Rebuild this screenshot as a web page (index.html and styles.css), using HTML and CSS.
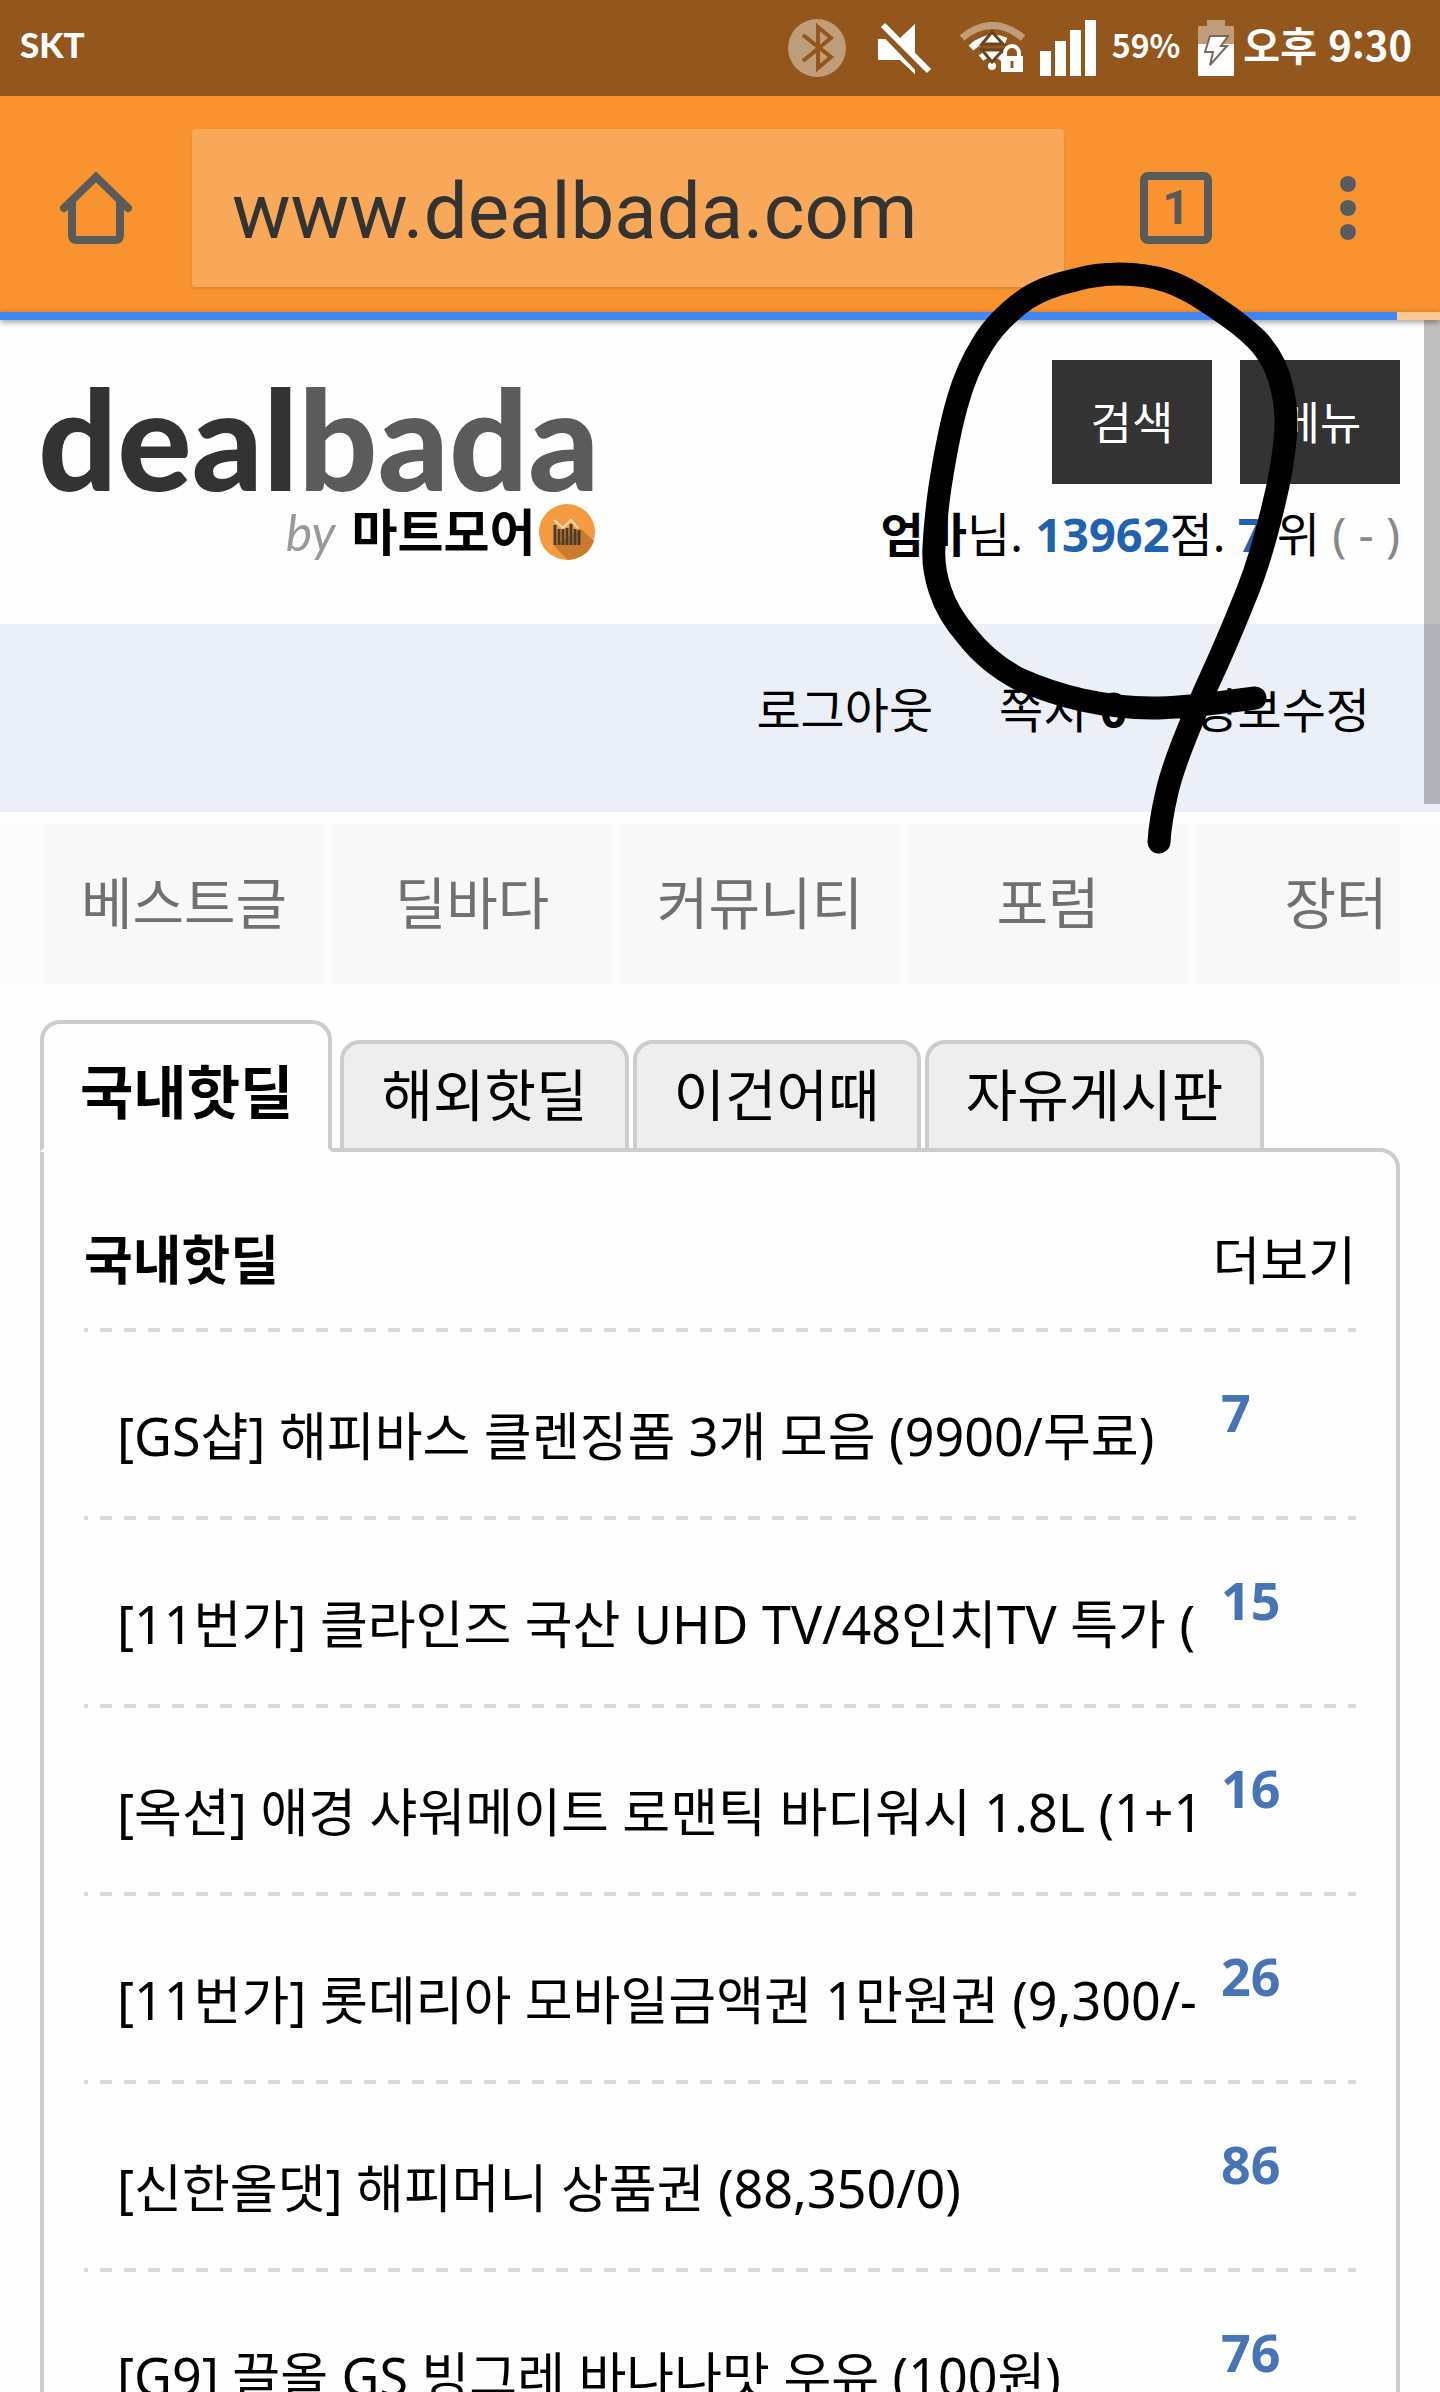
FILE: index.html
```
<!DOCTYPE html>
<html lang="ko">
<head>
    <meta charset="UTF-8">
    <meta name="viewport" content="width=device-width, initial-scale=1.0">
    <title>dealbada</title>
    <link rel="stylesheet" href="styles.css">
</head>
<body>
    <div class="statusbar">
        <span class="carrier">SKT</span>
        <div class="status-icons">
            <svg class="icon-bt" width="58" height="58" viewBox="0 0 58 58">
                <circle cx="29" cy="29" r="29" fill="#c19c78"/>
                <path d="M15 16 L43 38 L30 49 V8 L43 19 L15 42" fill="none" stroke="#93561c" stroke-width="4"/>
            </svg>
            <svg class="icon-mute" width="54" height="52" viewBox="0 0 54 52">
                <path d="M0 17 H8 L37 47 V52 L22 38 H0 Z M22 16 L37 2 V32 Z" fill="#fff"/>
                <path d="M1 8 L45 54" stroke="#93561c" stroke-width="3"/>
                <path d="M0 17 H6 L37 50 V52 L22 38 H0 Z" fill="#fff"/>
                <path d="M5 3 L51 49" stroke="#fff" stroke-width="6"/>
            </svg>
            <svg class="icon-wifi" width="66" height="52" viewBox="0 0 66 52">
                <path d="M3 16 Q33 -9 64 16" fill="none" stroke="#c19c78" stroke-width="7"/>
                <path d="M12 26 Q28 11 47 19" fill="none" stroke="#fff" stroke-width="7"/>
                <path d="M22 36 Q33 27 44 36" fill="none" stroke="#fff" stroke-width="7"/>
                <circle cx="33" cy="44" r="4" fill="#fff"/>
                <path d="M23 22 L33 10 L44 22 Z M23 28 H44 L33 40 Z" fill="#fff" stroke="#6b451f" stroke-width="3"/>
                <path d="M46 36 V31 a7 7 0 0 1 14 0 V36" fill="none" stroke="#fff" stroke-width="4"/>
                <rect x="42" y="34" width="22" height="16" fill="#fff"/>
                <path d="M53 39 V46" stroke="#93561c" stroke-width="3"/>
            </svg>
            <svg class="icon-signal" width="56" height="56" viewBox="0 0 56 56">
                <path d="M0 31H11V56H0Z M15 21H26V56H15Z M30 10H41V56H30Z M45 0H56V56H45Z" fill="#fff"/>
            </svg>
            <span class="percent">59%</span>
            <svg class="icon-battery" width="36" height="56" viewBox="0 0 36 56">
                <path d="M9 0H27V6H36V24H0V6H9Z" fill="#c19c78"/>
                <path d="M0 24H36V56H0Z" fill="#fff"/>
                <path d="M12 16H30L23 26H29L12 45L15 32H7Z" fill="#fff" stroke="#7a6a5a" stroke-width="2"/>
            </svg>
            <span class="time">오후 9:30</span>
        </div>
    </div>

    <div class="toolbar">
        <button class="tool-btn" type="button" aria-label="홈">
            <svg width="72" height="72" viewBox="0 0 72 72" fill="none" stroke="#5a5a5a" stroke-width="8">
                <path d="M4 36 L36 5 L68 36" stroke-linecap="round"/>
                <path d="M12 29 V63 Q12 68 17 68 H55 Q60 68 60 63 V29"/>
            </svg>
        </button>
        <input class="url" type="text" value="www.dealbada.com" aria-label="주소">
        <button class="tool-btn tab-count" type="button">1</button>
        <button class="tool-btn" type="button" aria-label="더보기 메뉴">
            <svg width="72" height="72" viewBox="0 0 72 72" fill="#5a5a5a">
                <circle cx="36" cy="12" r="8"/>
                <circle cx="36" cy="36" r="8"/>
                <circle cx="36" cy="60" r="8"/>
            </svg>
        </button>
    </div>
    <div class="progress"><div class="progress-bar" style="width: 97%"></div></div>

    <div class="page">
        <header class="header">
            <a class="logo" href="#">
                <span class="logo-name">deal<span class="logo-light">bada</span></span>
                <span class="logo-by">
                    <i>by</i>
                    <b>마트모어</b>
                    <svg width="56" height="56" viewBox="0 0 56 56">
                        <circle cx="28" cy="28" r="28" fill="#f49b42"/>
                        <path d="M15 42 L42 25 L55 37 Q49 54 29 56 Z" fill="#c97a2d"/>
                        <path d="M16 21V41 M20 25V41 M24 25V41 M28 24V41 M32 20V41 M36 25V41 M40 26V41" stroke="#4a3b2b" stroke-width="3"/>
                        <path d="M15 16 L24 24 L32 16 L39 24" fill="none" stroke="#f7dfc4" stroke-width="2"/>
                    </svg>
                </span>
            </a>
            <div class="header-right">
                <div class="header-btns">
                    <button class="dark-btn" type="button">검색</button>
                    <button class="dark-btn" type="button">메뉴</button>
                </div>
                <p class="user"><b>엄마</b>님. <b class="blue">13962</b>점. <b class="blue">7</b> 위 <span class="gray">( - )</span></p>
            </div>
        </header>

        <div class="member">
            <a href="#">로그아웃</a>
            <a href="#">쪽지 <b>0</b></a>
            <a href="#">정보수정</a>
        </div>

        <nav class="menu">
            <div class="menu-list">
                <a href="#">베스트글</a>
                <a href="#">딜바다</a>
                <a href="#">커뮤니티</a>
                <a href="#">포럼</a>
                <a href="#">장터</a>
            </div>
        </nav>

        <div class="board">
            <div class="tabs">
                <button class="tab active" type="button">국내핫딜</button>
                <button class="tab" type="button">해외핫딜</button>
                <button class="tab" type="button">이건어때</button>
                <button class="tab" type="button">자유게시판</button>
            </div>
            <div class="panel">
                <div class="panel-head">
                    <h2>국내핫딜</h2>
                    <a href="#">더보기</a>
                </div>
                <ul class="list">
                    <li><a href="#">[GS샵] 해피바스 클렌징폼 3개 모음 (9900/무료)</a><span class="count">7</span></li>
                    <li><a href="#">[11번가] 클라인즈 국산 UHD TV/48인치TV 특가 (</a><span class="count">15</span></li>
                    <li><a href="#">[옥션] 애경 샤워메이트 로맨틱 바디워시 1.8L (1+1</a><span class="count">16</span></li>
                    <li><a href="#">[11번가] 롯데리아 모바일금액권 1만원권 (9,300/-</a><span class="count">26</span></li>
                    <li><a href="#">[신한올댓] 해피머니 상품권 (88,350/0)</a><span class="count">86</span></li>
                    <li><a href="#">[G9] 끌올 GS 빙그레 바나나맛 우유 (100원)</a><span class="count">76</span></li>
                </ul>
            </div>
        </div>
        <div class="scrollbar"></div>
    </div>

    <!-- pen mark round the search button -->
    <svg class="pen" width="380" height="600" viewBox="920 260 380 600">
        <path d="M1255 698 C1220 702 1190 708 1152 708 C1127 708 1105 705 1082 700 C1060 695 1039 688 1019 679 C998 668 981 654 967 636 C954 621 945 606 940 590 C935 575 933 562 934 547 C935 527 937 508 940 487 C945 455 950 427 958 400 C964 379 972 361 982 345 C992 328 1008 312 1026 299 C1041 289 1057 284 1075 280 C1089 276 1104 274 1119 274 C1136 274 1152 276 1167 281 C1185 287 1200 297 1215 307 C1230 317 1244 327 1256 339 C1270 353 1278 370 1282 388 C1286 405 1287 422 1285 440 C1283 462 1279 483 1274 503 C1267 533 1259 562 1248 590 C1236 620 1224 649 1211 677 C1203 694 1196 711 1189 728 C1180 750 1172 770 1167 792 C1163 809 1160 825 1159 842"/>
    </svg>
</body>
</html>
```

FILE: styles.css
```
* {
    box-sizing: border-box;
    margin: 0;
    padding: 0;
}
body {
    position: relative;
    height: 100vh;
    overflow: hidden;
    background: #fefefe;
    color: #000;
    font-family: "Noto Sans", "Noto Sans CJK KR", sans-serif;
    font-size: 48px;
}
a {
    color: inherit;
    text-decoration: none;
}
button {
    border: none;
    background: none;
    font-family: inherit;
    color: inherit;
}
ul {
    list-style: none;
}
svg {
    display: block;
    flex: none;
}

/* phone status bar */
.statusbar {
    display: flex;
    align-items: center;
    justify-content: space-between;
    height: 96px;
    padding: 0 28px 0 20px;
    background: #93561c;
    color: #fff;
    font-family: "Noto Sans CJK KR", sans-serif;
    line-height: 88px;
}
.carrier {
    padding-bottom: 8px;
    font-family: Lato, sans-serif;
    font-size: 35px;
    font-weight: 900;
}
.status-icons {
    display: flex;
    align-items: center;
}
.icon-bt {
    margin-right: 32px;
}
.icon-mute {
    margin-right: 27px;
}
.icon-wifi {
    margin-right: 15px;
}
.icon-signal {
    margin-right: 16px;
}
.percent {
    padding-bottom: 8px;
    margin-right: 18px;
    font-size: 32px;
    font-weight: 700;
}
.icon-battery {
    margin-right: 9px;
}
.time {
    padding-bottom: 8px;
    font-size: 40px;
    font-weight: 700;
}

/* browser toolbar */
.toolbar {
    display: flex;
    align-items: center;
    height: 216px;
    padding: 8px 56px 0 60px;
    background: #f99330;
}
.tool-btn {
    flex: none;
    width: 72px;
    height: 72px;
}
.url {
    flex: 1;
    min-width: 0;
    height: 158px;
    margin: 0 76px 0 60px;
    padding: 6px 40px 0;
    border: none;
    border-radius: 4px;
    background: #f9a85a;
    box-shadow: 0 2px 3px rgba(0, 0, 0, 0.1);
    color: #333;
    font-family: Roboto, sans-serif;
    font-size: 78px;
}
.tab-count {
    margin-right: 100px;
    border: 8px solid #5a5a5a;
    border-radius: 8px;
    color: #5a5a5a;
    font-family: Roboto, sans-serif;
    font-size: 48px;
    font-weight: 700;
    line-height: 56px;
}
.progress {
    height: 8px;
    background: #fcc797;
    position: relative;
    box-shadow: 0 2px 6px rgba(0, 0, 0, 0.4);
}
.progress-bar {
    height: 8px;
    background: #4285f4;
}

/* site header */
.page {
    position: relative;
}
.header {
    display: flex;
    justify-content: space-between;
    height: 304px;
    padding: 40px 40px 0 38px;
}
.logo {
    display: flex;
    flex-direction: column;
    align-items: flex-end;
    color: #333;
}
.logo-name {
    padding-top: 12px;
    font-family: Lato, sans-serif;
    font-size: 139px;
    font-weight: 900;
    line-height: 132px;
}
.logo-light {
    color: #5b5b5b;
}
.logo-by {
    display: flex;
    align-items: center;
    height: 56px;
    padding-right: 4px;
    font-size: 50px;
    line-height: 56px;
}
.logo-by i {
    margin-right: 16px;
    color: #999;
    font-family: Lato, sans-serif;
}
.logo-by b {
    margin-right: 4px;
    color: #000;
}
.header-btns {
    display: flex;
    justify-content: flex-end;
    gap: 28px;
}
.dark-btn {
    width: 160px;
    height: 124px;
    padding-bottom: 4px;
    background: #333;
    color: #fff;
    font-size: 45px;
}
.user {
    padding-top: 16px;
    font-size: 47px;
    line-height: 68px;
    white-space: nowrap;
}
.blue {
    color: #1f62ad;
}
.gray {
    color: #888;
}
.member {
    display: flex;
    justify-content: flex-end;
    gap: 66px;
    height: 188px;
    padding-right: 70px;
    background: #ebeff7;
    line-height: 172px;
}

/* main menu */
.menu {
    margin-top: 12px;
    padding: 0 40px 0 44px;
    background: #fcfcfc;
}
.menu-list {
    display: flex;
    gap: 8px;
    overflow: hidden;
}
.menu-list a {
    flex: none;
    width: 280px;
    height: 160px;
    background: #f8f8f8;
    color: #707070;
    font-size: 56px;
    line-height: 156px;
    text-align: center;
}

/* board tabs */
.board {
    padding: 36px 40px 0;
}
.tabs {
    position: relative;
    display: flex;
    align-items: flex-end;
    gap: 4px;
}
.tab {
    height: 112px;
    padding: 0 37px 4px;
    border: 4px solid #ccc;
    border-radius: 20px 20px 0 0;
    background: #eee;
    font-size: 56px;
    line-height: 100px;
}
.tab.active {
    height: 132px;
    margin-right: 4px;
    padding: 12px 35px 0 36px;
    border-bottom-color: #fefefe;
    background: #fefefe;
    font-size: 58px;
    font-weight: 700;
}
.panel {
    margin-top: -4px;
    padding: 0 40px;
    border: 4px solid #ccc;
    border-radius: 0 20px 0 0;
}
.panel-head,
.list li {
    background: repeating-linear-gradient(90deg, #d9d9d9 0 4px, transparent 4px 16px, #d9d9d9 16px 24px) bottom / 100% 4px no-repeat;
    font-size: 52px;
}
.panel-head {
    display: flex;
    align-items: center;
    justify-content: space-between;
    height: 180px;
    padding-top: 30px;
}
.panel-head h2 {
    font-size: 53px;
}
.list li {
    display: flex;
    height: 188px;
    padding-left: 33px;
}
.list a {
    width: 1079px;
    overflow: hidden;
    white-space: nowrap;
    line-height: 208px;
}
.count {
    width: 160px;
    padding-left: 25px;
    color: #4674b5;
    font-weight: 700;
    line-height: 160px;
}

/* things that lie over the page */
.scrollbar {
    position: absolute;
    top: 0;
    right: 0;
    width: 16px;
    height: 484px;
    background: rgba(0, 0, 0, 0.25);
}
.pen {
    position: absolute;
    top: 260px;
    right: 140px;
    fill: none;
    stroke: #000;
    stroke-width: 23px;
    stroke-linecap: round;
    stroke-linejoin: round;
    pointer-events: none;
}
```
